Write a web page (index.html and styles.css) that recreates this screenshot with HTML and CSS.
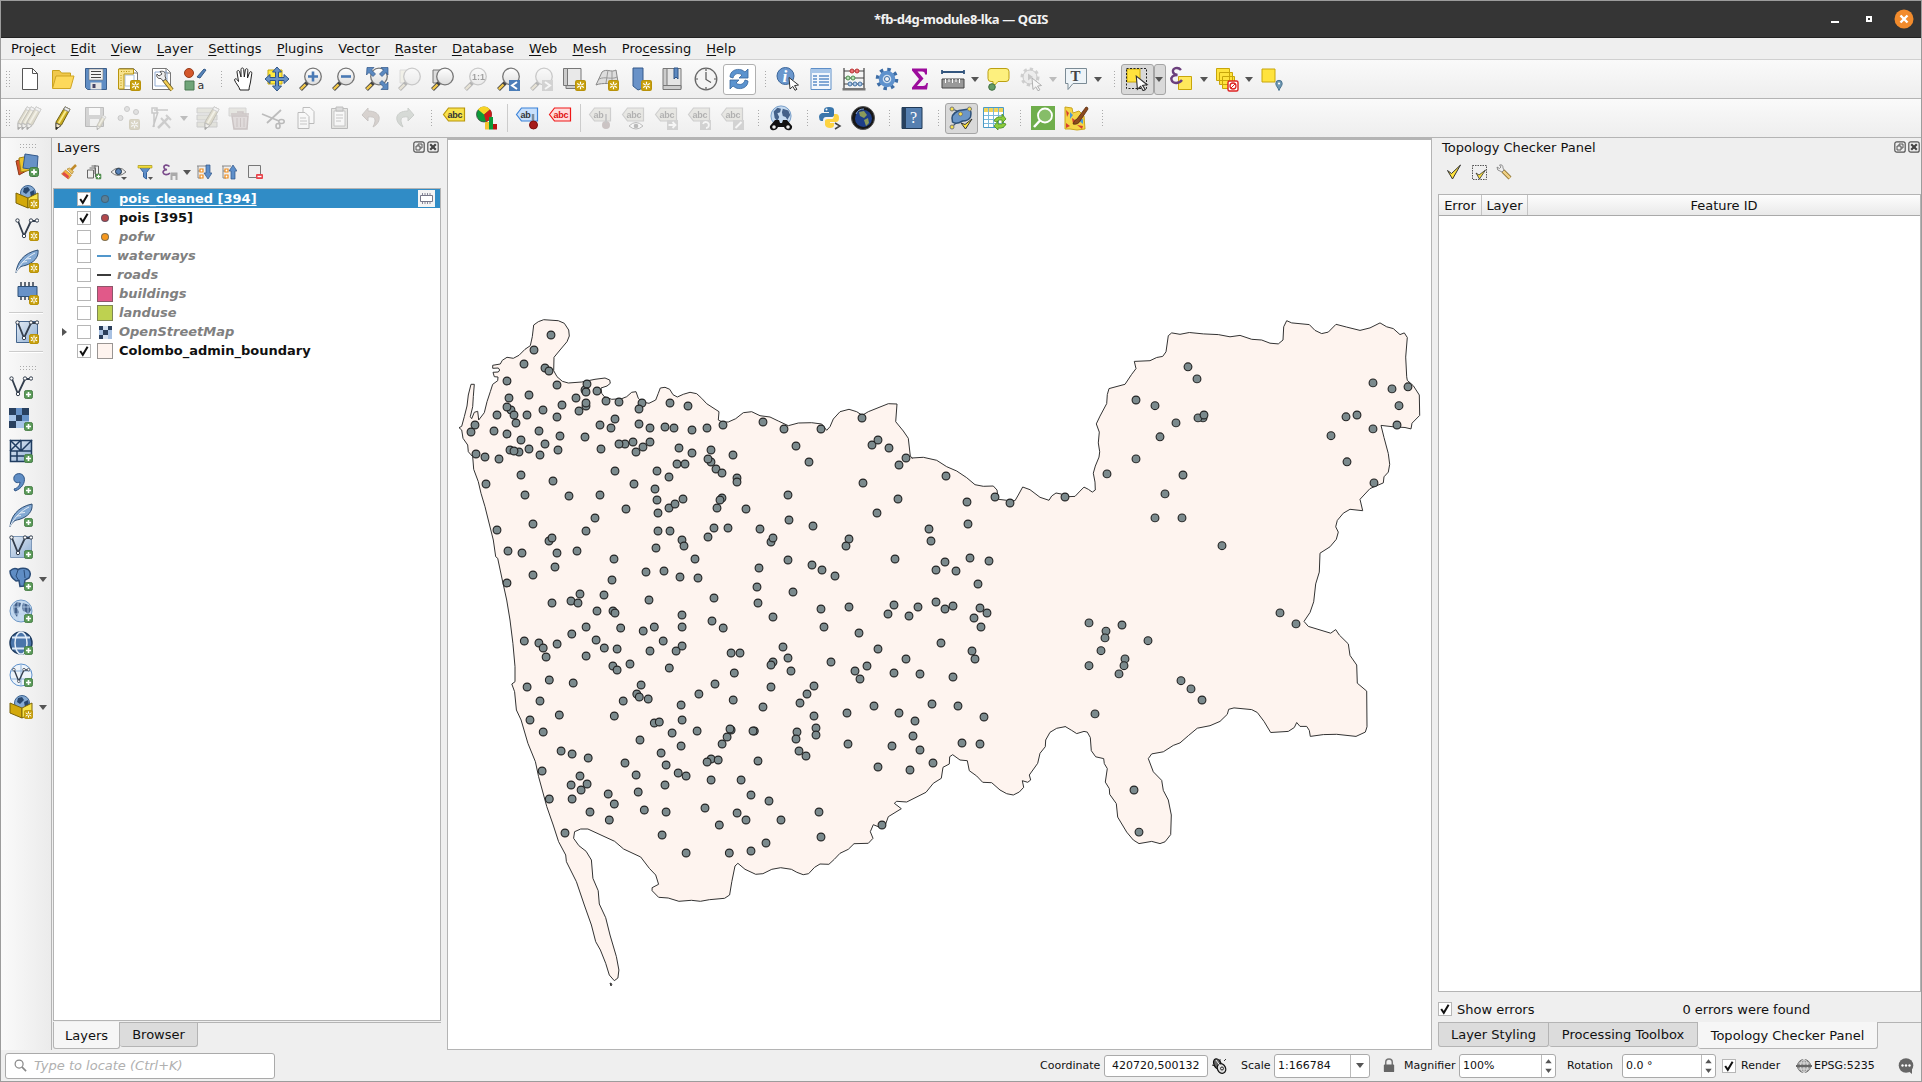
FILE: index.html
```html
<!DOCTYPE html>
<html lang="en">
<head>
<meta charset="utf-8">
<title>*fb-d4g-module8-lka — QGIS</title>
<link rel="stylesheet" href="styles.css">
</head>
<body>
<svg class="defs" aria-hidden="true">
<defs>
<linearGradient id="blue" x1="0" y1="0" x2="1" y2="1"><stop offset="0" stop-color="#e4ecf5"/><stop offset="1" stop-color="#8eaed3"/></linearGradient>
<linearGradient id="lens" x1="0" y1="0" x2="0" y2="1"><stop offset="0" stop-color="#fff"/><stop offset="1" stop-color="#ddd"/></linearGradient>
<symbol id="b-new" viewBox="0 0 10 10"><rect x=".5" y=".5" width="9" height="9" rx="1.5" fill="#c9a20e" stroke="#b8920a"/><path d="M5 1.500v7M1.900 3.200l6.200 3.600M8.100 3.200L1.900 6.800" stroke="#fff" stroke-width="1.100"/><circle cx="5" cy="5" r="1" fill="#c9a20e"/></symbol>
<symbol id="b-add" viewBox="0 0 10 10"><rect x=".5" y=".5" width="9" height="9" rx="2" fill="#5a9a58" stroke="#437b42"/><path d="M5 2.200v5.600M2.200 5h5.600" stroke="#fff" stroke-width="1.800"/></symbol>
<symbol id="cursor" viewBox="0 0 12 14"><path d="M1 1l9.500 7.500-4 .6 2.400 3.700-1.900 1-2.200-3.900-2.800 2.600z" fill="#fff" stroke="#333"/></symbol>
<symbol id="glass" viewBox="0 0 24 24"><path d="M9.500 15.500L2.500 22.500" stroke="#444" stroke-width="4"/><path d="M7.500 17.500L2.800 22.200" stroke="#f2c84a" stroke-width="2.400"/><circle cx="15" cy="9.500" r="8.300" fill="url(#lens)" stroke="#777" stroke-width="1.300"/></symbol>
<symbol id="pencil" viewBox="0 0 24 24"><path d="M5 16L14 .8l5 2.500L10.500 19 5 23.500z" fill="#c9ab22" stroke="#6f6216"/><path d="M7.700 17L16.500 2" stroke="#f8ea8a" stroke-width="2"/><path d="M14 .8l5 2.500-1.300 2.500-5-2.500z" fill="#eee" stroke="#888"/><path d="M5 17l5 2.500-5 4z" fill="#f4e6c8" stroke="#555"/><path d="M5 21v2.500l2.500-2z" fill="#222"/></symbol>
<symbol id="tag" viewBox="0 0 24 24"><path d="M1.500 9.500l5-6.500h16v13h-16z" fill="var(--f,#f9e24c)" stroke="var(--s,#b8960a)" stroke-width="1.200"/></symbol>
<symbol id="globe" viewBox="0 0 24 24"><circle cx="12" cy="12" r="11" fill="#c5daf0" stroke="#6d97c5"/><path d="M4 7l4-4 4 1-1 4-3 1 2 4-2 5-3-4zM14 4l6 2 2 5-3 5-2-3-3-1-1-4z" fill="#44618a"/></symbol>
<symbol id="pg" viewBox="0 0 24 24"><path d="M2.500 1.500h14l4 4v17h-18z" fill="#fff" stroke="#777"/><path d="M16 1.500v4.500h4.500" fill="none" stroke="#777"/></symbol>
<symbol id="vee" viewBox="0 0 24 24"><path d="M3 4l6 15L16 4h6" fill="none" stroke="#333e4d" stroke-width="1.800"/><g fill="#fff" stroke="#333e4d"><circle cx="2.500" cy="3.500" r="1.700"/><circle cx="9" cy="19" r="1.700"/><circle cx="16" cy="3.500" r="1.700"/><circle cx="22" cy="3.500" r="1.700"/></g></symbol>
<symbol id="feather" viewBox="0 0 24 24"><path d="M1 23.500C2 14 8 4 23 1c1 7-4 13-13 15.500C6 17.300 4 18 1 23.500z" fill="#83a9d3" stroke="#2f4f75"/><path d="M1 23C6 14 12 8 20 4M8 13l4-.4M11 10l5-.5" fill="none" stroke="#e6eef7"/></symbol>
<symbol id="box" viewBox="0 0 24 24"><circle cx="13" cy="8" r="7.500" fill="#85aad3" stroke="#3c6390"/><path d="M9 3l4-1 2 3-4 4-3-2zM15 7l4-2 1 5-4 2z" fill="#28476e"/><path d="M1 8l12 5v10L1 18z" fill="#d3a90b" stroke="#7c6408"/><path d="M13 13l10-5v10l-10 5z" fill="#f8e34b" stroke="#7c6408"/></symbol>
<symbol id="tick" viewBox="0 0 14 14"><path d="M3.200 7l2.600 3.800L10.600 2.800" fill="none" stroke="#111" stroke-width="2"/></symbol>
<symbol id="float" viewBox="0 0 12 12"><rect x=".8" y=".8" width="10.400" height="10.400" rx="2" fill="none" stroke="#555" stroke-width="1.200"/><path d="M5 5V3h4v4H7M3 5h4v4H3z" fill="none" stroke="#555"/></symbol>
<symbol id="close" viewBox="0 0 12 12"><rect x=".8" y=".8" width="10.400" height="10.400" rx="2" fill="none" stroke="#555" stroke-width="1.200"/><path d="M3.200 3.200l5.600 5.600M8.800 3.200L3.200 8.800" stroke="#444" stroke-width="2.200"/></symbol>
<symbol id="spin" viewBox="0 0 14 24"><path d="M3.500 9L7 4.500 10.500 9zM3.500 15L7 19.500 10.500 15z" fill="#555"/></symbol>
<symbol id="funnel" viewBox="0 0 16 16"><path d="M1.500 2h13l-5 6.500V15l-3-2V8.500z" fill="#5e8fca" stroke="#35629b"/><path d="M1 1.500h14v2.500H1z" fill="#f2dc3c" stroke="#a8930f" stroke-width=".6"/></symbol>
<symbol id="tree" viewBox="0 0 16 16"><path d="M1 2h9M2 2v12h3M2 7h3" fill="none" stroke="#888"/><path d="M4 5h3v3H4zM4 11h3v3H4z" fill="#fff" stroke="#f08c1a" stroke-width="1.200"/></symbol>
</defs>
</svg>

<div class="window">
<header class="titlebar">
  <span class="title">*fb-d4g-module8-lka — QGIS</span>
  <div class="winbtns"><i class="min"></i><i class="max"></i><svg class="x" viewBox="0 0 20 20"><circle cx="10" cy="10" r="9.500" fill="#f28b2c"/><path d="M6.500 6.500l7 7M13.500 6.500l-7 7" stroke="#fff" stroke-width="2.400"/></svg></div>
</header>
<nav class="menubar"><span>Pro<u>j</u>ect</span><span><u>E</u>dit</span><span><u>V</u>iew</span><span><u>L</u>ayer</span><span><u>S</u>ettings</span><span><u>P</u>lugins</span><span>Vect<u>o</u>r</span><span><u>R</u>aster</span><span><u>D</u>atabase</span><span><u>W</u>eb</span><span><u>M</u>esh</span><span>Pro<u>c</u>essing</span><span><u>H</u>elp</span></nav>

<div class="toolbar">
  <i class="grip first"></i>
  <b><svg viewBox="0 0 24 24"><path d="M4.500 1.500h10l5 5v16h-15z" fill="#fff" stroke="#555"/><path d="M14.500 1.500v5h5" fill="none" stroke="#555"/></svg></b>
  <b><svg viewBox="0 0 24 24"><path d="M1.500 21V3.500h7l2 2.500h9v3" fill="#f0c84b" stroke="#c9a21c"/><path d="M1.500 21.500L5 9h18l-3.500 12.500z" fill="#fdd95c" stroke="#cfa523"/></svg></b>
  <b><svg viewBox="0 0 24 24"><path d="M1.500 1.500h21v21h-19l-2-2z" fill="#5f8dc4" stroke="#3c5f8c"/><path d="M5 2h14v11H5z" fill="#f2f2f2" stroke="#777" stroke-width=".6"/><path d="M7 4.500h10M7 7.500h10M7 10.500h10" stroke="#444"/><path d="M6.500 15.500h11v7h-11z" fill="#e5e5e5"/><path d="M8.500 17h3v4h-3z" fill="#446"/></svg></b>
  <b><svg viewBox="0 0 24 24"><use href="#pg"/><path d="M8 8h9v11H8z" fill="#fff" stroke="#a9bfdc"/><path d="M1.500 2h15v5H7V22H1.500z" fill="#f7e28e" stroke="#b8950e"/><path d="M4 4.500h10M4 8v12" stroke="#b8950e" stroke-dasharray="1 1.500"/><use href="#b-new" x="13" y="13" width="11" height="11"/></svg></b>
  <b><svg viewBox="0 0 24 24"><use href="#pg"/><path d="M5 5h12v14H5z" fill="none" stroke="#90abd2"/><path d="M14 13l8 10" stroke="#6b5a1c" stroke-width="4"/><path d="M14 13l8 10" stroke="#f4cf55" stroke-width="2.500"/><path d="M7 7l2 2 3-2-2-2.500c4-1 6 1 5 4.500l1 3-3 2-2-2.500c-3 .5-5-1.500-4-4.500z" fill="#eee" stroke="#555"/></svg></b>
  <b><svg viewBox="0 0 24 24"><circle cx="6" cy="6" r="4.500" fill="#d4572b" stroke="#963b1b"/><path d="M14 10l7-8 2 1-6 8z" fill="#5584bb" stroke="#345a87"/><path d="M2 14h9v9H2z" fill="#70a579" stroke="#4a7853"/><text x="14.500" y="21.500" font-family="DejaVu Sans" font-size="11" fill="#333">a</text></svg></b>
  <i class="grip"></i>
  <b><svg viewBox="0 0 24 24"><path d="M8 23c-1-4-4-6-5.500-10 0-2 2.500-1.500 4 1.500L5 5c0-2 2.300-2 2.700 0L9 10V2.500c0-2 2.700-2 2.700 0L12.300 10l1-7c.3-2 2.700-1.500 2.500.3L15.500 11l2-5.500c.7-1.500 2.700-.8 2.300.8L18.500 15c-.5 3-1.500 5-1.500 8z" fill="#fff" stroke="#222"/></svg></b>
  <b><svg viewBox="0 0 24 24"><path d="M3 3h14v14H3z" fill="#ffe940" stroke="#c2a50e"/><path d="M12 0l4.500 5h-3v5.500H19v-3l5 4.500-5 4.500v-3h-5.500V19h3L12 24l-4.500-5h3v-5.500H5v3L0 12l5-4.500v3h5.500V5h-3z" fill="#6892c8" stroke="#2f5586"/></svg></b>
  <b><svg viewBox="0 0 24 24"><use href="#glass"/><path d="M15 4.500v10M10 9.500h10" stroke="#4a7ab5" stroke-width="2.600"/></svg></b>
  <b><svg viewBox="0 0 24 24"><use href="#glass"/><path d="M10 9.500h10" stroke="#4a7ab5" stroke-width="2.600"/></svg></b>
  <b><svg viewBox="0 0 24 24"><use href="#glass"/><path d="M3 .5h7L7.500 3l4 4-2.500 2.500-4-4L2.500 8zM24 .5h-7L19.500 3l-4 4L18 9.500l4-4L24 8zM24 22.500h-7l2.500-2.500-4-4 2.500-2.500 4 4 2-2.500z" fill="#5b89c0" stroke="#2f5586" stroke-width=".7"/></svg></b>
  <b class="off"><svg viewBox="0 0 24 24"><path d="M3 3h12v13H3z" fill="#f1e9a0" stroke="#aaa"/><use href="#glass"/></svg></b>
  <b><svg viewBox="0 0 24 24"><path d="M3 3h12v13H3z" fill="#ddd" stroke="#777"/><use href="#glass"/></svg></b>
  <b class="off"><svg viewBox="0 0 24 24"><use href="#glass"/><text x="9" y="13" font-size="9" font-weight="bold" font-family="Liberation Sans">1:1</text></svg></b>
  <b><svg viewBox="0 0 24 24"><use href="#glass"/><path d="M13 13h11v11H13z" fill="#4b7db8"/><path d="M21 15l-5 3.500 5 3.500" fill="none" stroke="#fff" stroke-width="2"/></svg></b>
  <b class="off"><svg viewBox="0 0 24 24"><use href="#glass"/><path d="M13 13h11v11H13z" fill="#999"/><path d="M16 15l5 3.500-5 3.500" fill="none" stroke="#fff" stroke-width="2"/></svg></b>
  <b><svg viewBox="0 0 24 24"><path d="M5 1.500h14v20H5z" fill="#e9e9e9" stroke="#777"/><path d="M1.500 1.500h4v17h-4zM4 21.500h15v-3H4z" fill="#ccc" stroke="#777"/><use href="#b-new" x="13" y="13" width="11" height="11"/></svg></b>
  <b><svg viewBox="0 0 24 24"><path d="M7 5c5-4 9 1 14-2l2 12c-6 3-15 0-22 3z" fill="#ddd" stroke="#888"/><path d="M4 12c6-3 13 1 18-2M13 3l-2 13M17 4v13" fill="none" stroke="#999"/><use href="#b-new" x="13" y="13" width="11" height="11"/></svg></b>
  <b><svg viewBox="0 0 24 24"><path d="M5 1h10v20l-5 2-5-4z" fill="#6992c8" stroke="#34598a"/><use href="#b-new" x="13" y="13" width="11" height="11"/></svg></b>
  <b><svg viewBox="0 0 24 24"><path d="M5 1.500h15v20H5z" fill="#e4e4e4" stroke="#777"/><path d="M2 1.500h4v17H2zM2 18.500h18v4H2z" fill="#ccc" stroke="#777"/><path d="M13 1h4v11l-2-2-2 2z" fill="#5c88bf" stroke="#2f5586"/></svg></b>
  <b><svg viewBox="0 0 24 24"><circle cx="12" cy="12" r="10.800" fill="#f4f4f4" stroke="#666" stroke-width="1.300"/><path d="M12 5v7.500l5 3M12 2v2M12 20v2M2 12h2M20 12h2" fill="none" stroke="#555" stroke-width="1.200"/></svg></b>
  <b class="lit"><svg viewBox="0 0 24 24"><path d="M3 10C3 4 9 1 15 3l3 2 3-3v9h-9l3-3C11 5 7 7 6 11z" fill="#5b93cf" stroke="#36669d" stroke-width=".8"/><path d="M21 14c0 6-6 9-12 7l-3-2-3 3v-9h9l-3 3c4 3 8 1 9-3z" fill="#5b93cf" stroke="#36669d" stroke-width=".8"/></svg></b>
  <i class="grip"></i>
  <b><svg viewBox="0 0 24 24"><circle cx="9.500" cy="9" r="8.500" fill="#6a97cd" stroke="#3b669a"/><text x="6.500" y="15" font-family="Liberation Serif" font-weight="bold" font-style="italic" font-size="17" fill="#fff">i</text><use href="#cursor" x="12" y="9" width="12" height="15"/></svg></b>
  <b><svg viewBox="0 0 24 24"><path d="M2 1.500h20v21H2z" fill="#f3f7fc" stroke="#5d8ec7"/><path d="M2 2h20v4H2z" fill="#a8c6e8"/><path d="M4 9h4M4 12h4M4 15h4M4 18h4M10 9h10M10 12h10M10 15h10M10 18h10" stroke="#5d8ec7" stroke-width="1.500"/></svg></b>
  <b><svg viewBox="0 0 24 24"><path d="M2 1v21M22 1v21M2 4h20M2 11h20M2 17h20" stroke="#444" stroke-width="1.200"/><path d="M.5 21h23v2.500H.5z" fill="#777"/><g fill="#e9747a" stroke="#b33"><circle cx="10" cy="4" r="2"/><circle cx="15" cy="4" r="2"/></g><g fill="#b6dfb6" stroke="#4c8c4c"><circle cx="6" cy="11" r="2"/><circle cx="11" cy="11" r="2"/></g><g fill="#abc8e8" stroke="#44709f"><circle cx="8" cy="17" r="2"/><circle cx="13" cy="17" r="2"/><circle cx="18" cy="17" r="2"/></g></svg></b>
  <b><svg viewBox="0 0 24 24"><circle cx="12" cy="12" r="9.500" fill="none" stroke="#3d6da6" stroke-width="3.600" stroke-dasharray="3.400 4.060"/><circle cx="12" cy="12" r="6.300" fill="#cfe0f2" stroke="#5f92cd" stroke-width="4"/><circle cx="12" cy="12" r="2.500" fill="#f4f4f4" stroke="#3d6da6"/></svg></b>
  <b><svg viewBox="0 0 24 24"><path d="M4 1.500h15v6h-2c0-2-1-3-3-3H9.500l6 7-6.500 7.500h6c2 0 3-1 3.500-3h1.500l-1 6.500H4v-2l7-8.500-7-8.500z" fill="#9c0c9c"/></svg></b>
  <b><svg viewBox="0 0 24 24"><path d="M1 5h22M1 3v4M23 3v4" stroke="#34567e" stroke-width="1.800"/><path d="M1 12h22v9H1z" fill="#999" stroke="#444"/><path d="M4.500 12v4M8 12v3M11.500 12v4M15 12v3M18.500 12v4" stroke="#fff"/></svg></b>
  <i class="dd"></i>
  <b><svg viewBox="0 0 24 24"><path d="M5 1.500h15q3 0 3 3v7q0 3-3 3h-8L7 20v-5.500H5q-3 0-3-3v-7q0-3 3-3z" fill="#fdf07e" stroke="#bba012"/><circle cx="6" cy="20" r="3.300" fill="#649b66" stroke="#3f6e41"/></svg></b>
  <b class="off"><svg viewBox="0 0 24 24"><circle cx="11" cy="10" r="8" fill="#eee" stroke="#888" stroke-width="3" stroke-dasharray="3.200 3"/><circle cx="11" cy="10" r="7" fill="#ddd" stroke="#777"/><path d="M9 6.500l5 3.500-5 3.500z" fill="#777"/><use href="#cursor" x="12" y="10" width="12" height="14"/></svg></b>
  <i class="dd off"></i>
  <b><svg viewBox="0 0 24 24"><path d="M1.500 1.500h21v15H9L4 22.500v-6H1.500z" fill="#eef4f8" stroke="#7b8b95"/><text x="6.500" y="14" font-family="Liberation Serif" font-weight="bold" font-size="15" fill="#444">T</text></svg></b>
  <i class="dd"></i>
  <i class="grip"></i>
  <b class="on"><svg viewBox="0 0 24 24"><path d="M2 2h13v13H2z" fill="#ffe33d" stroke="#c8a60a"/><path d="M1.500 1.500h20v20h-20z" fill="none" stroke="#222" stroke-dasharray="2 1.500"/><use href="#cursor" x="10" y="8" width="14" height="16"/></svg></b>
  <i class="dd on"></i>
  <b><svg viewBox="0 0 24 24"><path d="M8.500 9.500h13v13h-13z" fill="#ffe85c" stroke="#c8a60a"/><path d="M11 3C8-.5 2 1 3 5c.4 1.800 2 2.700 4.500 3C3 8 .8 10 1.500 12.800 2.500 17 9 17 12 13" fill="none" stroke="#6b3f7c" stroke-width="2.400"/></svg></b>
  <i class="dd"></i>
  <b><svg viewBox="0 0 24 24"><g fill="#ffe33d" stroke="#c8a60a"><path d="M1.500 1.500h13v12h-13zM4.500 5.500h13v12h-13zM7.500 9.500h12v12h-12z"/></g><rect x="13" y="14" width="10" height="10" rx="1.500" fill="#fff" stroke="#d22" stroke-width="1.400"/><circle cx="18" cy="19" r="3" fill="none" stroke="#d22" stroke-width="1.300"/><path d="M20 17l-4 4" stroke="#d22"/></svg></b>
  <i class="dd"></i>
  <b><svg viewBox="0 0 24 24"><path d="M2 2h13v13H2z" fill="#ffe33d" stroke="#c8a60a"/><path d="M19 23.500c-1-3-3.200-4.500-3.200-7a3.200 3.200 0 016.400 0c0 2.500-2.200 4-3.200 7z" fill="#6e97b2" stroke="#4a7490"/><circle cx="19" cy="16.500" r="1.100" fill="#fff"/></svg></b>
</div>

<div class="toolbar">
  <i class="grip first"></i>
  <b class="off"><svg viewBox="0 0 24 24"><use href="#pencil" x="-5" width="24" height="24"/><use href="#pencil" x="-1" width="24" height="24"/><use href="#pencil" x="4" width="24" height="24"/></svg></b>
  <b><svg viewBox="0 0 24 24"><use href="#pencil"/></svg></b>
  <b class="off"><svg viewBox="0 0 24 24"><path d="M1.500 1.500h18v19h-18z" fill="#999" stroke="#555"/><path d="M5 2h11v7H5z" fill="#fff"/><path d="M6 13h9v7H6z" fill="#eee"/><use href="#pencil" x="10" y="9" width="15" height="15"/></svg></b>
  <b class="off"><svg viewBox="0 0 24 24"><g fill="#bbb" stroke="#777"><circle cx="10" cy="3" r="2.500"/><circle cx="3.500" cy="12" r="2.500"/><circle cx="19" cy="6" r="2.500"/></g><use href="#b-new" x="12" y="13" width="11" height="11"/></svg></b>
  <b class="off"><svg viewBox="0 0 24 24"><path d="M2 2h5v5H2zM4 4h14M4 7v14M8 6L3 21" fill="none" stroke="#777" stroke-width="1.500"/><path d="M8 22L19 11" stroke="#888" stroke-width="2.500"/><path d="M11 12l9 10M16 9l5 5" stroke="#888" stroke-width="2"/></svg></b>
  <i class="dd off"></i>
  <b class="off"><svg viewBox="0 0 24 24"><path d="M2 2h20v5H2zM2 9h20v5H2zM2 16h20v5H2z" fill="#c9c98c" stroke="#888"/><use href="#pencil" x="5"/></svg></b>
  <b class="off"><svg viewBox="0 0 24 24"><path d="M1 2h17v8H1z" fill="#ccc7a0" stroke="#999"/><path d="M4 10h16l-1 13H6zM3 8h18M9 6h6v2" fill="#d7a8a8" stroke="#a66" stroke-width="1.500"/><path d="M9 12v9M12.500 12v9M16 12v9" stroke="#a66"/></svg></b>
  <b class="off"><svg viewBox="0 0 24 24"><path d="M1 8l17 7M20 4L6 17" stroke="#555" stroke-width="1.800"/><ellipse cx="20.500" cy="15.500" rx="2.700" ry="2" fill="none" stroke="#555" stroke-width="1.600"/><ellipse cx="17" cy="20" rx="2" ry="2.500" fill="none" stroke="#555" stroke-width="1.600"/></svg></b>
  <b class="off"><svg viewBox="0 0 24 24"><path d="M9 1.500h7l4 4v12H9z" fill="#fff" stroke="#555"/><path d="M4 6.500h7l4 4v12H4z" fill="#fff" stroke="#555"/><path d="M6 12h6M6 15h7M6 18h7" stroke="#777"/></svg></b>
  <b class="off"><svg viewBox="0 0 24 24"><path d="M4.500 2.500h16v20h-16z" fill="#c9c9b8" stroke="#555"/><path d="M7 5h11v15H7z" fill="#fff" stroke="#777"/><path d="M9 1h7v4H9z" fill="#aaa" stroke="#555"/><path d="M9 9h7M9 12h7M9 15h5" stroke="#777"/></svg></b>
  <b class="off"><svg viewBox="0 0 24 24"><path d="M8 5v-3L2 9l6 6v-4c7-1 9 2 5 10 9-5 9-16-5-16z" fill="#c08d70" stroke="#8c6d5c"/></svg></b>
  <b class="off"><svg viewBox="0 0 24 24"><path d="M15 5v-3l6 7-6 6v-4c-7-1-9 2-5 10-9-5-9-16 5-16z" fill="#8bb08b" stroke="#6d8c6d"/></svg></b>
  <i class="grip"></i>
  <b><svg viewBox="0 0 24 24"><use href="#tag" y="-1"/><text x="5.500" y="11.500" class="abc">abc</text></svg></b>
  <b><svg viewBox="0 0 24 24"><circle cx="9" cy="8.500" r="7.500" fill="#0c9a3a" stroke="#333" stroke-width=".7"/><path d="M9 8.500L3 3.500A7.500 7.500 0 0115 3.500z" fill="#f8d426"/><path d="M9 8.500L15 3.500A7.500 7.500 0 0111 15.700z" fill="#cc1919"/><path d="M10 16h4v7.500h-4z" fill="#f4c430"/><path d="M14 11h4v12.500h-4z" fill="#0c9a3a"/><path d="M18 18h4v5.500h-4z" fill="#b11"/></svg></b>
  <i class="sep"></i>
  <b><svg viewBox="0 0 24 24" style="--f:#c8e0fc;--s:#3b82d8"><use href="#tag" y="-1"/><text x="5.500" y="11.500" class="abc">ab</text><path d="M18 8v9" stroke="#7b8b9b" stroke-width="2.500"/><circle cx="18.500" cy="19" r="4" fill="#a61c1c" stroke="#7d1010"/></svg></b>
  <b><svg viewBox="0 0 24 24" style="--f:#ffdcdc;--s:#f01818"><use href="#tag" y="-1"/><text x="5.500" y="11.500" class="abc red">abc</text></svg></b>
  <i class="sep"></i>
  <b class="off"><svg viewBox="0 0 24 24" style="--f:#d2cfa8;--s:#888"><use href="#tag" y="-1"/><text x="5.500" y="11.500" class="abc">ab</text><circle cx="18" cy="19" r="4" fill="#a66"/><path d="M18 8v9" stroke="#777" stroke-width="2"/></svg></b>
  <b class="off"><svg viewBox="0 0 24 24" style="--f:#d2cfa8;--s:#888"><use href="#tag" y="-1"/><text x="5.500" y="11.500" class="abc">abc</text><path d="M8 20q7-7 14 0-7 6-14 0z" fill="#fff" stroke="#555"/><circle cx="15" cy="20" r="2.300" fill="#555"/></svg></b>
  <b class="off"><svg viewBox="0 0 24 24" style="--f:#d2cfa8;--s:#888"><use href="#tag" y="-1"/><text x="5.500" y="11.500" class="abc">abc</text><path d="M13 14h11v10H13z" fill="#999"/><path d="M14.500 19h7M18.500 16l3 3-3 3" fill="none" stroke="#fff" stroke-width="1.800"/></svg></b>
  <b class="off"><svg viewBox="0 0 24 24" style="--f:#d2cfa8;--s:#888"><use href="#tag" y="-1"/><text x="5.500" y="11.500" class="abc">abc</text><path d="M13 14h11v10H13z" fill="#999"/><path d="M16 18a3 3 0 113 4" fill="none" stroke="#fff" stroke-width="1.800"/></svg></b>
  <b class="off"><svg viewBox="0 0 24 24" style="--f:#d2cfa8;--s:#888"><use href="#tag" y="-1"/><text x="5.500" y="11.500" class="abc">abc</text><path d="M13 14h11v10H13z" fill="#999"/><path d="M15.500 22l6-6" stroke="#fff" stroke-width="2"/></svg></b>
  <i class="grip"></i>
  <b><svg viewBox="0 0 24 24"><use href="#globe" width="22" height="22" x="1" y="-1"/><path d="M6 14h4l1 3h2l1-3h4l5 6c1 5-6 6-8 1h-6c-2 5-9 4-8-1z" fill="#111"/><circle cx="5" cy="21" r="1.800" fill="#eee"/><circle cx="19" cy="21" r="1.800" fill="#eee"/></svg></b>
  <i class="grip"></i>
  <b><svg viewBox="0 0 24 24"><path d="M6 7V4q0-3 5-3t5 3v5q0 2-3 2H8q-3 0-3 4H3q-2-1-2-4t3-4h7V6H6z" fill="#3a76ab"/><path d="M16 8h2q3 0 3 4t-3 4h-6v1h4v2q0 3-4 3t-5-3v-4q0-2 3-2h4q2 0 2-5z" fill="#fdd341"/><circle cx="8.500" cy="3.500" r="1" fill="#fff"/><path d="M17 17l5 3-5 3" fill="none" stroke="#444" stroke-width="1.500"/></svg></b>
  <b><svg viewBox="0 0 24 24"><ellipse cx="12" cy="12" rx="11.500" ry="11.500" fill="#161616" stroke="#555"/><circle cx="12.500" cy="12.500" r="8.500" fill="#1d3e88"/><path d="M8 6l5-1 3 4-3 3-4-2zM13 14l4-2 1 5-3 3z" fill="#8b9a5a"/><path d="M5 8q2-5 8-5" stroke="#7fa6e8" fill="none"/></svg></b>
  <i class="grip"></i>
  <b><svg viewBox="0 0 24 24"><path d="M2 1.500h20v21H2z" fill="#557fb0" stroke="#1f3855"/><path d="M2 1.500h4v21H2z" fill="#27415f"/><text x="10" y="17" font-family="Liberation Serif" font-size="16" fill="#fff">?</text></svg></b>
  <i class="grip"></i>
  <b class="on"><svg viewBox="0 0 24 24"><path d="M3 3l8 3M3 21l5-5" stroke="#456" stroke-width="1.200"/><path d="M3.500 16Q1 8 10 4.500L20 3q3 2 1.500 8-2 4-8 4Q7 19 3.500 16z" fill="#6b96c7" stroke="#2d5078" stroke-width="1.500"/><g fill="#f8e34b" stroke="#777"><circle cx="3" cy="3" r="2"/><circle cx="20.500" cy="3" r="2"/><circle cx="11.500" cy="8" r="2"/><circle cx="3" cy="21" r="2"/></g><path d="M12 17l4 1.500L23 13l-6.500 10z" fill="#ffe33d" stroke="#333"/></svg></b>
  <b><svg viewBox="0 0 24 24"><path d="M1.500 1.500h20v20h-20z" fill="#fff" stroke="#4a9ac6"/><path d="M2 2h19v4H2z" fill="#f0d35a"/><path d="M2 9.500h19M2 13.500h19M2 17.500h19M6.500 2v19M11.500 2v19M16.500 2v19" stroke="#7ab8da"/><path d="M12 15q2-5 8-4V8l4 5-4 4v-3q-4-1-5 2zM24 18q-2 5-8 4v2l-4-4 4-5v3q4 1 5-1z" fill="#8ccc3c" stroke="#4a8a1e" stroke-width=".8"/></svg></b>
  <i class="grip"></i>
  <b><svg viewBox="0 0 24 24"><path d="M0 0h24v24H0z" fill="#6fae4c"/><path d="M9.500 14L3 21" stroke="#fff" stroke-width="2.500"/><circle cx="14" cy="9.500" r="7" fill="#86bd68" stroke="#fff" stroke-width="1.800"/></svg></b>
  <b><svg viewBox="0 0 24 24"><path d="M1 1l7 1 1 5 6-2 5 5 1 13-8 1-7-1-5 0z" fill="#f5d547" stroke="#caa51c"/><path d="M2 4l3 3-2 4zM8 12l3 2-2 4zM13 19l6 1-1 3zM2 17l4 3-4 2z" fill="#d8412f"/><path d="M6 6l3 3-3 4zM14 14l5-1v5z" fill="#4c9ad6"/><path d="M9 18q1-4 4-5l9-12q2 0 2 2l-8 12q-2 4-7 3z" fill="#8c4a1f" stroke="#57290d" stroke-width=".8"/></svg></b>
  <i class="grip"></i>
</div>

<main class="work">
  <aside class="side">
    <i class="hgrip"></i>
    <div class="grp a">
      <b><svg viewBox="0 0 24 24"><path d="M1 8l9-3 3 12-9 5z" fill="#d6552b" stroke="#8c3717"/><path d="M4 5l10-2 2 14-10 2z" fill="#edc52d" stroke="#a18312"/><path d="M10 1l13 2-1 14-14-2z" fill="#6792c7" stroke="#34598a"/><use href="#b-add" x="14" y="14" width="10" height="10"/></svg></b>
      <b><svg viewBox="0 0 24 24"><use href="#box"/><use href="#b-new" x="14" y="14" width="10" height="10"/></svg></b>
      <b><svg viewBox="0 0 24 24"><use href="#vee"/><use href="#b-new" x="14" y="14" width="10" height="10"/></svg></b>
      <b><svg viewBox="0 0 24 24"><use href="#feather"/><use href="#b-new" x="14" y="14" width="10" height="10"/></svg></b>
      <b><svg viewBox="0 0 24 24"><path d="M6 1v18M10 1v18M14 1v18M18 1v18" stroke="#333e4d" stroke-width="1.500"/><path d="M3 5.500h19v10H3z" fill="#6892c8" stroke="#2d5078"/><use href="#b-new" x="14" y="14" width="10" height="10"/></svg></b>
    </div>
    <i class="hsep"></i>
    <div class="grp a"><b><svg viewBox="0 0 24 24"><path d="M1.500 1.500h21v21h-21z" fill="url(#blue)" stroke="#44658d"/><use href="#vee" y="-1"/><use href="#b-new" x="14" y="14" width="10" height="10"/></svg></b></div>
    <i class="hsep"></i>
    <i class="hgrip two"></i>
    <div class="grp">
      <b><svg viewBox="0 0 24 24"><use href="#vee"/><use href="#b-add" x="15" y="15" width="9" height="9"/></svg></b>
      <b><svg viewBox="0 0 24 24"><path d="M0 1h20v20H0z" fill="#a8c5e8"/><path d="M0 1h7v7H0zM13 1h7v7h-7zM7 8h6v6H7zM0 14h7v7H0z" fill="#28405f"/><path d="M7 1h6v7H7zM13 8h7v6h-7z" fill="#6792c7"/><use href="#b-add" x="15" y="15" width="9" height="9"/></svg></b>
      <b><svg viewBox="0 0 24 24"><path d="M1.500 1.500h21v21h-21z" fill="url(#blue)" stroke="#1f3c60" stroke-width="1.500"/><path d="M1 12h22M12 1v11M1 1l11 11M12 1L1 12M23 1L12 12M8 12v11M1 17h14" stroke="#1f3c60" stroke-width="1.500"/><use href="#b-add" x="15" y="15" width="9" height="9"/></svg></b>
      <b><svg viewBox="0 0 24 24"><path d="M5 18c4-1 6-4 6-7-4 2-7-1-6-5 1-4 8-5 10 0 2 6-3 12-9 14z" fill="#5f8dc4" stroke="#2f5586"/><use href="#b-add" x="15" y="15" width="9" height="9"/></svg></b>
      <b><svg viewBox="0 0 24 24"><use href="#feather"/><use href="#b-add" x="15" y="15" width="9" height="9"/></svg></b>
      <b><svg viewBox="0 0 24 24"><path d="M1.500 1.500h21v21h-21z" fill="url(#blue)" stroke="#7d98b8"/><use href="#vee" y="-1"/><use href="#b-add" x="15" y="15" width="9" height="9"/></svg></b>
      <b class="more"><svg viewBox="0 0 24 24"><path d="M1 4q4-4 8-1.500Q14 0 19 2.500q4 3 1 8.500l-4 2-1 6-4 .5-1-6-3 .5Q1 10 1 4z" fill="#5f8dc4" stroke="#2a4c77" stroke-width="1.500"/><path d="M9 3l-2 6 3 5M15 3l1 8" fill="none" stroke="#2a4c77"/><use href="#b-add" x="15" y="15" width="9" height="9"/></svg></b>
      <b><svg viewBox="0 0 24 24"><use href="#globe"/><path d="M5 4v16M9 2v20M15 2v20M19 4v16M2 8h20M2 15h20" stroke="#b9d2ec" stroke-width=".8"/><use href="#b-add" x="15" y="15" width="9" height="9"/></svg></b>
      <b><svg viewBox="0 0 24 24"><circle cx="12" cy="12" r="11" fill="#4a75aa" stroke="#1f3c60" stroke-width="1.500"/><path d="M3 6.500h18M3 17.500h18" stroke="#dbe8f5" stroke-width="1.800"/><ellipse cx="12" cy="12" rx="6" ry="11" fill="none" stroke="#e5eef8" stroke-width="1.500"/><use href="#b-add" x="15" y="15" width="9" height="9"/></svg></b>
      <b><svg viewBox="0 0 24 24"><circle cx="12" cy="12" r="11" fill="#eef4fa" stroke="#5f92cd"/><path d="M2 8h20M2 16h20M12 1v22" stroke="#8fb4dd"/><g transform="translate(3 4) scale(.75)"><use href="#vee" width="24" height="24"/></g><use href="#b-add" x="15" y="15" width="9" height="9"/></svg></b>
      <b class="more"><svg viewBox="0 0 24 24"><use href="#box"/><use href="#b-new" x="15" y="15" width="9" height="9"/></svg></b>
    </div>
  </aside>

  <section class="dock layers">
    <div class="dockhead"><span>Layers</span><svg><use href="#float"/></svg><svg><use href="#close"/></svg></div>
    <div class="docktools">
      <svg viewBox="0 0 16 16"><path d="M15 1L9 7" stroke="#c08a2a" stroke-width="2.500"/><path d="M4.500 6l6 5-3 4-7-5z" fill="#f3b23e" stroke="#b57a1a" stroke-width=".6"/><path d="M1 10l6 5 1-3-5-4z" fill="#e04a48"/><path d="M6 5l5 5 1.500-2.500L8.500 4z" fill="#e9c46b" stroke="#a87d22" stroke-width=".6"/></svg>
      <svg viewBox="0 0 16 16"><path d="M1.500 6h6v8h-6zM3.500 4h6v9M5.500 2h7v9" fill="none" stroke="#666"/><path d="M9 1v9" stroke="#666"/><use href="#b-add" x="9.500" y="9.500" width="6" height="6"/></svg>
      <svg viewBox="0 0 16 16"><path d="M0 8q8-8 15 0-8 7-15 0z" fill="#eee" stroke="#777"/><circle cx="7.500" cy="7.500" r="3" fill="#5681b7" stroke="#234"/><path d="M10 13h6l-3 3z" fill="#555"/></svg>
      <svg viewBox="0 0 16 16"><use href="#funnel"/><path d="M11 13h5l-2.500 3z" fill="#555"/></svg>
      <svg viewBox="0 0 16 16"><path d="M7.500 2.500C5 0 1.500 1 2 3.500 2.200 5 3.500 5.500 5 5.700 2 5.700.8 7 1.200 8.800 2 11.500 6 11 8 9" fill="none" stroke="#7a4b8b" stroke-width="1.700"/><path d="M8.500 16V8.500h7V16h-2v-4h-3v4z" fill="#aaa"/></svg>
      <i class="dd"></i>
      <svg viewBox="0 0 16 16"><use href="#tree"/><path d="M10 1h4v8h2l-4 6-4-6h2z" fill="#5e8fca" stroke="#2f5586" stroke-width=".7"/></svg>
      <svg viewBox="0 0 16 16"><use href="#tree"/><path d="M10 15h4V7h2l-4-6-4 6h2z" fill="#5e8fca" stroke="#2f5586" stroke-width=".7"/></svg>
      <svg viewBox="0 0 16 16"><path d="M1.500 1.500h12v12h-12z" fill="#eee" stroke="#777"/><rect x="9" y="10" width="7" height="5" rx="1" fill="#e8434a"/><path d="M10.500 12.500h4" stroke="#fff" stroke-width="1.400"/></svg>
    </div>
    <ul class="tree">
      <li class="sel"><s></s><em class="cb"><svg><use href="#tick"/></svg></em><i class="dot" style="background:#5a7f96"></i><span><u>pois_cleaned [394]</u></span><svg class="mem" viewBox="0 0 17 17"><path d="M0 0h17v17H0z" fill="#f4f4f4"/><path d="M4.500 3v11M7 3v11M9.500 3v11M12 3v11" stroke="#889"/><path d="M2.500 5.500h12v6h-12z" fill="#fff" stroke="#778"/></svg></li>
      <li><s></s><em class="cb"><svg><use href="#tick"/></svg></em><i class="dot" style="background:#b3484b"></i><span>pois [395]</span></li>
      <li class="hid"><s></s><em class="cb"></em><i class="dot" style="background:#f6981e"></i><span>pofw</span></li>
      <li class="hid"><s></s><em class="cb"></em><i class="line" style="background:#5197cc"></i><span>waterways</span></li>
      <li class="hid"><s></s><em class="cb"></em><i class="line" style="background:#3b3b3b"></i><span>roads</span></li>
      <li class="hid"><s></s><em class="cb"></em><i class="fill" style="background:#e15989"></i><span>buildings</span></li>
      <li class="hid"><s></s><em class="cb"></em><i class="fill" style="background:#bed150"></i><span>landuse</span></li>
      <li class="hid"><s class="exp"></s><em class="cb"></em><svg class="ras" viewBox="0 0 16 16"><path d="M2 2h13v13H2z" fill="#a8c1e2"/><path d="M2 2h4v4H2zM11 2h4v4h-4zM6 6h5v5H6zM2 11h4v4H2z" fill="#2b3f5c"/><path d="M6 2h5v4H6zM6 11h5v4H6z" fill="#d6e2f2"/></svg><span>OpenStreetMap</span></li>
      <li><s></s><em class="cb"><svg><use href="#tick"/></svg></em><i class="fill" style="background:#fef4ef"></i><span>Colombo_admin_boundary</span></li>
    </ul>
    <div class="tabs"><span class="tab cur" style="width:67px">Layers</span><span class="tab" style="width:78px">Browser</span></div>
  </section>

  <section class="map"><svg id="map" viewBox="448 140 983 909"><defs><marker id="poi" markerUnits="userSpaceOnUse" markerWidth="10" markerHeight="10" refX="5" refY="5"><circle cx="5" cy="5" r="3.900" fill="#7b8a8d" stroke="#232323" stroke-width="1.100"/></marker></defs></svg></section>

  <section class="dock topo">
    <div class="dockhead"><span>Topology Checker Panel</span><svg><use href="#float"/></svg><svg><use href="#close"/></svg></div>
    <div class="docktools">
      <svg viewBox="0 0 16 16"><path d="M1.500 6.500l4 3L14.500 1 6.500 15z" fill="#ffe33d" stroke="#333"/></svg>
      <svg viewBox="0 0 16 16"><path d="M1.500 1.500h14v14h-14z" fill="none" stroke="#555" stroke-dasharray="1.500 1"/><path d="M5 9l3 2 6.500-5-6 9z" fill="#ffe33d" stroke="#333" stroke-width=".8"/></svg>
      <svg viewBox="0 0 16 16"><path d="M7 7l7 7" stroke="#7c6221" stroke-width="4"/><path d="M7 7l7 7" stroke="#f0d084" stroke-width="2.500"/><path d="M1 3l2.500 1.500L5 3 3.500 1Q7 0 7 4l1 2-2 2-2-1Q1 7 1 3z" fill="#eee" stroke="#777" stroke-width=".8"/></svg>
    </div>
    <div class="table"><div class="thead"><span style="width:42px">Error</span><span style="width:45px">Layer</span><span class="grow">Feature ID</span></div></div>
    <div class="errs"><em class="cb"><svg><use href="#tick"/></svg></em><span>Show errors</span><span class="found">0 errors were found</span></div>
    <div class="tabs"><span class="tab" style="width:111px">Layer Styling</span><span class="tab" style="width:149px">Processing Toolbox</span><span class="tab cur" style="width:180px">Topology Checker Panel</span></div>
  </section>
</main>

<footer class="status">
  <div class="locate"><svg viewBox="0 0 14 14"><circle cx="5.500" cy="5.500" r="4.300" fill="none" stroke="#888" stroke-width="1.300"/><path d="M8.700 8.700L13 13" stroke="#888" stroke-width="1.800"/></svg><span>Type to locate (Ctrl+K)</span></div>
  <span class="coordl">Coordinate</span><div class="field coord">420720,500132</div>
  <svg class="mouse" viewBox="0 0 16 16"><path d="M3 1l3 3M1 7l3 1M9 1v3M13 3l2-2" stroke="#333"/><ellipse cx="6.500" cy="6" rx="3.500" ry="5.500" transform="rotate(-25 6.500 6)" fill="#666" stroke="#111" stroke-width="1.300"/><ellipse cx="10.500" cy="10.500" rx="4" ry="5" transform="rotate(-25 10.500 10.500)" fill="#ddd" stroke="#111" stroke-width="1.300"/><path d="M5 2l5 7" stroke="#eee"/><circle cx="11" cy="10.500" r="1.500" fill="none" stroke="#222"/></svg>
  <span class="scalel">Scale</span><div class="field combo"><span>1:166784</span><i class="dd"></i></div>
  <svg class="lock" viewBox="0 0 12 16"><path d="M2.500 8V4.500a3.500 3.500 0 017 0V8" fill="none" stroke="#777" stroke-width="1.600"/><rect x=".5" y="7" width="11" height="8" rx="1" fill="#666"/></svg>
  <span class="magl">Magnifier</span><div class="field mag"><span>100%</span><svg><use href="#spin"/></svg></div>
  <span class="rotl">Rotation</span><div class="field rot"><span>0.0 °</span><svg><use href="#spin"/></svg></div>
  <em class="cb"><svg><use href="#tick"/></svg></em><span class="ren">Render</span>
  <svg class="crs" viewBox="0 0 16 16"><circle cx="8" cy="8" r="6.500" fill="#999" stroke="#666"/><path d="M8 1v14M2.500 5h11M2.500 11h11" stroke="#eee" stroke-width=".8"/><ellipse cx="8" cy="8" rx="3.500" ry="6.500" fill="none" stroke="#eee" stroke-width=".8"/><path d="M0 8h16" stroke="#666" stroke-width="2"/></svg><span>EPSG:5235</span>
  <svg class="msg" viewBox="0 0 16 16"><circle cx="8" cy="7.500" r="7.300" fill="#666"/><path d="M9 12l5 4v-6z" fill="#666"/><g fill="#fff"><circle cx="4.500" cy="7.500" r="1.200"/><circle cx="8" cy="7.500" r="1.200"/><circle cx="11.500" cy="7.500" r="1.200"/></g></svg>
</footer>
</div>
<script src="map.js"></script>
</body>
</html>
```
FILE: styles.css
```css
* { box-sizing: border-box; }
body { margin: 0; font: 13px "DejaVu Sans", sans-serif; color: #111; background: #efefef; }
i, em, b { font-style: normal; font-weight: normal; }
.defs { position: absolute; width: 0; height: 0; }
.window { width: 1922px; height: 1082px; display: flex; flex-direction: column; border: 1px solid #9c9c9c; overflow: hidden; }

.titlebar { height: 37px; flex: none; background: #353535; border-bottom: 1px solid #222; display: flex; align-items: center; position: relative; justify-content: center; }
.title { color: #f2f2f2; font: bold 13px "Noto Sans", sans-serif; letter-spacing: -.4px; }
.winbtns { position: absolute; right: 7px; top: 8px; display: flex; align-items: center; height: 20px; }
.min { width: 8px; height: 2px; background: #fff; margin: 6px 27px 0 0; }
.max { width: 6px; height: 6px; border: 2px solid #fff; margin-right: 22px; }
.x { width: 20px; height: 20px; }

.menubar { height: 22px; flex: none; display: flex; gap: 15.100px; padding: 0 10px; line-height: 21px; border-bottom: 1px solid #d0d0d0; }
u { text-underline-offset: 2px; text-decoration-thickness: 1px; }

.toolbar { height: 39px; flex: none; display: flex; align-items: center; border-bottom: 1px solid #b4b4b4; background: linear-gradient(#fafafa, #eeeeee); }
.toolbar b { width: 33px; height: 31px; flex: none; display: flex; align-items: center; justify-content: center; border-radius: 3px; border: 1px solid transparent; }
.toolbar b svg { width: 24px; height: 24px; overflow: visible; }
.toolbar b.off svg { opacity: .35; filter: grayscale(.7); }
.toolbar .on { background: #d9d9d9; border: 1px solid #a5a5a5; height: 31px; border-radius: 3px; }
.toolbar .lit { background: #fff; border-color: #b0b0b0; }
.grip { width: 16px; height: 18px; flex: none; background: radial-gradient(circle, #aaa .7px, transparent 1px) 9px 0 / 3px 3px content-box; padding: 0 4px 0 8px; }
.grip.first { width: 12.500px; padding: 0 4px 0 4px; }
.sep { width: 7px; height: 28px; flex: none; display: flex; justify-content: center; }
.sep::before { content: ""; width: 1px; background: #ccc; }
.dd { width: 12px; flex: none; display: inline-flex; align-items: center; justify-content: center; }
.dd::before { content: ""; border: 4px solid transparent; border-top: 5px solid #555; border-bottom: 0; }
.toolbar .dd::before { margin-left: -2px; }
.dd.off { opacity: .35; }
.abc { font: bold 9px "Liberation Sans", sans-serif; letter-spacing: -.2px; fill: #333; }
.abc.red { fill: #e01010; }

.work { flex: 1; display: flex; min-height: 0; }
.side { width: 51px; height: 912px; border-right: 1px solid #b4b4b4; background: linear-gradient(90deg, #fafafa, #ebebeb); display: flex; flex-direction: column; }
.hgrip { width: 17px; height: 6px; margin: 5px 0 0 18px; flex: none; background: radial-gradient(circle, #aaa .7px, transparent 1px) 0 0 / 3px 3px; }
.hgrip.two { margin-top: 10px; }
.grp b { display: flex; height: 32px; padding-left: 8px; align-items: center; }
.grp.a b { padding-left: 14px; }
.grp svg { width: 24px; height: 24px; }
.more::after { content: ""; margin-left: 6px; border: 4px solid transparent; border-top: 5px solid #555; border-bottom: 0; }
.hsep { height: 1px; margin: 3px 8px; background: #ccc; box-shadow: 0 1px #fff; }

.dock { display: flex; flex-direction: column; height: 912px; }
.layers { width: 388px; margin-left: 1px; }
.dockhead { height: 18px; flex: none; display: flex; align-items: center; padding: 0 2px 0 4px; }
.dockhead span { flex: 1; }
.dockhead svg { width: 12px; height: 12px; margin-left: 2px; }
.docktools { display: flex; align-items: center; height: 32px; flex: none; padding-left: 8px; gap: 9.200px; }
.docktools svg { width: 16px; height: 16px; flex: none; }
.docktools .dd { margin: 0 -6px 0 -6px; }
.tree { list-style: none; margin: 0; padding: 0; flex: 1; background: #fff; border: 1px solid #b4b4b4; font-weight: bold; }
.tree li { height: 19px; display: flex; align-items: center; padding-right: 5px; }
.tree li.sel { background: #308cc6; color: #fff; }
.tree li span { flex: 1; }
.tree .hid { color: #808080; font-style: italic; }
.tree s { width: 23px; height: 8px; flex: none; padding-left: 8px; }
.exp::before { content: ""; display: block; width: 0; border: 4px solid transparent; border-left: 5px solid #555; border-right: 0; }
.cb { width: 14px; height: 14px; flex: none; border: 1px solid #b6b6b6; background: #fff; display: inline-flex; }
.cb svg { width: 14px; height: 14px; margin: -1px; }
.dot { width: 8px; height: 8px; border-radius: 50%; border: 1px solid #35536b99; margin: 0 10px; }
.line { width: 14px; height: 2px; margin: 0 6px; }
.fill { width: 16px; height: 16px; border: 1px solid #55555599; margin: 0 6px; }
.ras { width: 16px; height: 16px; margin: 0 6px; }
.mem { width: 17px; height: 17px; }
.tabs { display: flex; height: 28px; flex: none; margin-top: 1px; border-top: 1px solid #b4b4b4; }
.tab { height: 24px; line-height: 24px; text-align: center; background: #dcdcdc; border: 1px solid #b4b4b4; border-top: 0; border-left-width: 0; border-radius: 0 0 3px 3px; }
.tab:first-child { border-left-width: 1px; }
.tab.cur { height: 27px; line-height: 27px; background: #f6f6f6; margin-top: -1px; }

.map { width: 985px; height: 912px; margin-left: 6px; background: #fff; border: 1px solid #b4b4b4; border-top-width: 2px; display: flex; }
#map { width: 983px; height: 909px; display: block; }

.topo { flex: 1; padding-left: 6px; }
.topo .dockhead { padding-right: 1px; }
.topo .docktools { padding-left: 8px; }
.table { margin-top: 6px; flex: 1; background: #fff; border: 1px solid #b4b4b4; }
.thead { height: 21px; display: flex; background: linear-gradient(#fdfdfd, #e9e9e9); border-bottom: 1px solid #a9a9a9; line-height: 21px; }
.thead span { border-right: 1px solid #c4c4c4; text-align: center; box-sizing: content-box; }
.thead .grow { flex: 1; border: 0; }
.errs { height: 29px; flex: none; display: flex; align-items: center; padding-top: 5px; gap: 5px; }
.found { margin-left: 143px; }

.status { height: 32px; flex: none; display: flex; align-items: center; font-size: 11px; padding: 1px 7px 0 4px; }
.locate { width: 270px; height: 26px; border: 1px solid #aaa; border-radius: 3px; background: #fff; display: flex; align-items: center; gap: 7px; padding-left: 8px; color: #b0b0b0; font: italic 13px "DejaVu Sans", sans-serif; }
.locate svg { width: 13px; height: 13px; }
.coordl { margin-left: 765px; width: 64px; }
.field { height: 24px; border: 1px solid #aaa; border-radius: 3px; background: #fff; display: flex; align-items: center; padding-left: 3px; }
.field span { flex: 1; }
.field svg { width: 14px; height: 22px; border-left: 1px solid #bbb; }
.coord { width: 104px; padding-left: 7px; height: 22px; }
.mouse { width: 16px; height: 16px; margin: 0 14px 0 3px; }
.scalel { width: 33px; }
.combo { width: 96px; }
.combo .dd { width: 19px; height: 22px; border-left: 1px solid #bbb; }
.lock { width: 12px; height: 15px; margin: 0 9px 0 13px; }
.magl { width: 55px; }
.mag { width: 97px; }
.rotl { width: 55px; margin-left: 11px; }
.rot { width: 94px; }
.status .cb { margin: 0 5px 0 6px; }
.ren { width: 55px; }
.crs { width: 16px; height: 16px; margin-right: 2px; }
.msg { width: 16px; height: 16px; margin-left: auto; }
```
FILE: map.js
```js
// Each sheet: origin x, origin y, units per pixel in x and y, then x,y pairs.
const outline = [
  [445, 300, 3, 3, '42,383 50,379 58,350 66,318 70,285 78,253 88,253 85,290 83,320 76,350 80,356 88,337 98,334 101,360 118,338 126,305 136,275 143,253 158,242 159,231 148,230 144,217 160,216 164,210 160,204 143,205 143,196 166,192 172,181 186,172 205,175 222,166 240,148 256,137 262,110 266,75 280,65 296,59 340,62 358,70 371,90 373,108 366,125 345,150 327,172 326,212 336,230 352,244 370,249 410,246 450,238 480,234 494,240 496,250 486,258 468,264 470,280 478,290 500,298 530,296 545,290 560,277 573,275 580,295 592,306 612,310 632,300 640,280 646,264 660,262 674,268 684,284 697,291 715,283 735,277 755,281 770,295 785,311 822,335 820,360 832,366 850,366 872,356 895,338 920,335 945,347 975,351 1000,363 1030,377 1060,369 1100,368 1130,372 1145,391 1155,380 1165,357 1185,335 1212,328 1235,335 1252,346 1270,335 1305,321 1330,311 1356,312 1352,365 1375,393 1390,415 1396,468 1402,475'],
  [740, 380, 3, 3, '515,234 550,232 590,241 620,260 650,273 680,293 705,314 730,319 760,318 771,330 775,358 800,361 825,362 835,345 848,321 870,329 900,352 927,361 935,348 948,339 964,342'],
  [1060, 300, 3, 2.8, '14,551 45,550 60,535 72,524 85,530 97,538 106,532 105,510 100,485 106,465 117,440 119,425 115,400 118,370 109,347 120,325 140,290 142,265 147,248 195,236 215,208 228,192 223,172 270,170 290,161 308,158 318,145 325,100 335,92 360,96 388,91 430,95 475,97 510,103 540,99 575,110 605,112 630,121 655,123 669,112 671,75 680,58 695,64 748,69 765,85 785,94 805,90 828,68 860,76 900,85 930,78 960,64 980,75 1000,80 1020,97 1033,92 1042,105 1037,160 1040,215 1042,225 1060,240 1078,266 1079,323 1056,345 1053,361 1035,357 1000,355 963,351 972,385 985,430 989,460 985,482 972,495 970,512 930,528 900,558 908,590 870,586 850,597 832,617 827,635 835,650 829,670 810,691 780,709 778,762 767,795 761,845 750,875 732,900 745,914 812,933 827,923 838,938 865,963 870,995 890,1022 892,1073 920,1095 921,1195 916,1210 888,1222 830,1216 790,1217 751,1222 748,1205 740,1194 720,1194 710,1183 703,1197 685,1208 632,1211 612,1180 592,1155 575,1147 522,1142 506,1146 502,1160 480,1180 450,1192 412,1199 385,1220 360,1240 340,1247 310,1265 275,1271 265,1284 280,1321 305,1345 310,1373 325,1400 334,1442 332,1497 315,1517 300,1522 275,1516 237,1522 220,1512 200,1490 173,1448 169,1410 149,1384 148,1368 136,1350 142,1312 133,1298 131,1284 107,1279 94,1262 91,1225 82,1210 72,1208 50,1214 35,1205 15,1194'],
  [740, 380, 3, 3, '975,1040 950,1045 930,1057 917,1080 916,1100 900,1120 893,1150 868,1185 872,1200 863,1207 847,1202 851,1222 838,1236 820,1245 800,1241 780,1230 755,1208 728,1207 710,1188 688,1172 682,1142 660,1140 638,1124 629,1130 628,1152 609,1162 604,1195 580,1210 558,1237 500,1266 470,1264 463,1270 484,1286 445,1310 436,1335 415,1340 400,1334 391,1355 399,1375 385,1390 342,1391 325,1408 300,1420 283,1438'],
  [445, 620, 2.8, 3, '1075,733 1050,732 1035,742 1018,761 1003,764 985,757 970,748 940,743 915,748 890,761 870,763 840,748 820,730 812,738 803,785 797,825 783,835 740,839 715,844 690,841 655,844 625,834 598,832 580,812 580,803 598,793 590,765 572,745 548,711 500,687 475,664 400,627 380,627 363,635 360,655 375,677 395,694 410,720 414,775 429,812 432,852 450,893 462,945 480,1010 487,1050 484,1074 474,1082 460,1065 450,1030 435,990 422,965 410,915 390,855 368,785 340,725 338,705 318,665 303,615 285,560 262,470 253,425 232,370 213,300 200,270 195,215 187,192 196,185 196,140 190,70 182,0'],
  [445, 300, 3, 3, '185,900 172,840 158,775 152,770 145,720 130,660 120,620 108,580 100,545 86,508 83,470 70,455 68,435 54,415 50,390']
];

const pois = [
  [445, 300, 3, 3, '318,105 267,150 237,192 300,204 312,213 186,243 336,255 252,285 192,294 198,330 186,321 207,345 213,369 156,345 246,345 294,330 351,315 336,351 393,294 402,333 420,270 426,252 423,276 423,318 423,309 456,273 483,303 522,306 591,309 582,327 675,309 729,318 90,375 78,396 147,393 186,402 282,393 345,408 228,420 300,432 420,411 93,462 120,471 162,477 195,450 222,456 207,453 252,447 285,465 339,450 465,375 498,384 510,357 582,372 615,384 660,381 687,384 741,390 786,384 834,375 468,447 540,432 522,432 564,426 615,426 594,441 573,456 702,444 741,459 798,450 864,465 696,492 720,492 798,486 789,477 813,507 831,519 876,534 876,546 228,525 324,543 123,552 240,585 372,588 465,585 510,513 567,552 543,627 636,513 672,531 630,567 636,600 639,639 672,624 690,612 714,597 831,594 825,600 816,624 903,627 264,672 450,654 156,690 423,693 312,723 321,714 189,753 231,759 336,759 396,753 330,801 264,825 186,849 507,777 501,840 603,816 657,813 705,831 759,834 750,777 633,744 639,693 675,693 711,720 717,738 789,711 807,684 849,684 945,687 978,726 984,714 942,804 936,861 939,909 984,951 1029,780 1032,660 1029,585 1092,486 1053,438 1017,387 954,366 1128,387 1251,354 1281,435 1299,420 1332,444 1383,474 1362,495 1254,549 1359,597 1296,639 1104,678 1212,717 1203,738 1101,795 1131,810 1170,828 1350,777 1044,876 1128,927 1212,921 1347,915 1329,942 1392,948 1419,921 321,909 378,903 399,909 405,882 477,885 456,933 504,933 510,939 612,900 711,945 807,894 801,963'],
  [445, 620, 2.8, 3, '395,21 355,42 492,24 555,33 586,21 664,21 779,24 222,63 263,69 275,84 283,111 314,72 423,60 446,84 482,87 395,108 470,138 482,150 518,132 574,93 611,63 664,78 647,93 801,99 826,99 628,144 292,180 230,201 266,243 359,189 238,300 275,336 320,285 474,288 499,243 549,195 537,222 544,231 569,237 711,222 756,192 810,159 807,240 661,255 664,300 586,309 600,306 636,339 706,333 801,330 798,327 790,351 776,372 661,378 546,360 325,393 356,402 401,414 272,453 378,468 353,495 398,492 381,510 356,537 292,537 457,522 474,552 406,576 460,600 336,639 504,429 535,465 541,516 558,570 605,399 619,435 653,459 675,468 616,495 619,576 745,417 765,420 734,426 745,480 829,480 728,564 768,615 818,579 608,645 675,699 796,699'],
  [740, 380, 3, 3, '618,288 681,366 765,351 810,369 975,351 684,432 567,447 573,483 615,546 588,570 648,573 690,534 747,543 714,612 588,666 615,687 639,678 720,684 741,699 702,714 723,741 252,741 357,759 129,801 144,834 153,873 99,846 93,855 93,921 273,846 345,873 381,858 360,897 414,807 498,837 462,879 540,882 603,789 696,813 705,837 639,891 222,918 201,942 180,969 69,981 222,1008 228,1044 228,1065 171,1056 168,1077 177,1113 198,1128 43,1053 39,1053 321,999 402,978 477,999 525,1023 519,1068 576,972 654,978 732,1011 324,1092 456,1098 540,1110 666,1089 720,1092 579,1149 510,1170 414,1161 54,1143 33,1245 87,1263 18,1320 123,1320 237,1296 243,1371 78,1389 33,1413 426,1335'],
  [1060, 300, 3, 2.8, '384,187 411,221 228,280 285,296 348,344 300,383 429,330 414,330 432,322 228,445 141,487 369,490 315,543 285,610 366,610 486,688 939,232 996,249 1044,243 1017,296 1011,350 939,361 858,327 891,322 813,380 861,453 942,512 660,876 708,907 87,904 186,910 138,927 135,946 264,954 123,982 87,1024 195,1005 192,1024 177,1047 363,1066 393,1089 426,1120 105,1159 222,1372 237,1490']
];

const place = sheets => sheets.map(([ox, oy, sx, sy, pts]) =>
  pts.split(' ').map(p => {
    const [x, y] = p.split(',');
    return (ox + x / sx).toFixed(1) + ',' + (oy + y / sy).toFixed(1);
  }).join(' ')).join(' ');

const map = document.getElementById('map');
const shape = (tag, attrs) => {
  const el = document.createElementNS('http://www.w3.org/2000/svg', tag);
  for (const key in attrs) el.setAttribute(key, attrs[key]);
  map.appendChild(el);
};
const land = { fill: '#fef4ef', stroke: '#333', 'stroke-width': 1, 'stroke-linejoin': 'round' };

shape('polygon', { points: place(outline), ...land });
shape('polygon', { points: '610,983 612,984 611,986', ...land });
shape('polyline', {
  points: place(pois), fill: 'none',
  'marker-start': 'url(#poi)', 'marker-mid': 'url(#poi)', 'marker-end': 'url(#poi)'
});
```
